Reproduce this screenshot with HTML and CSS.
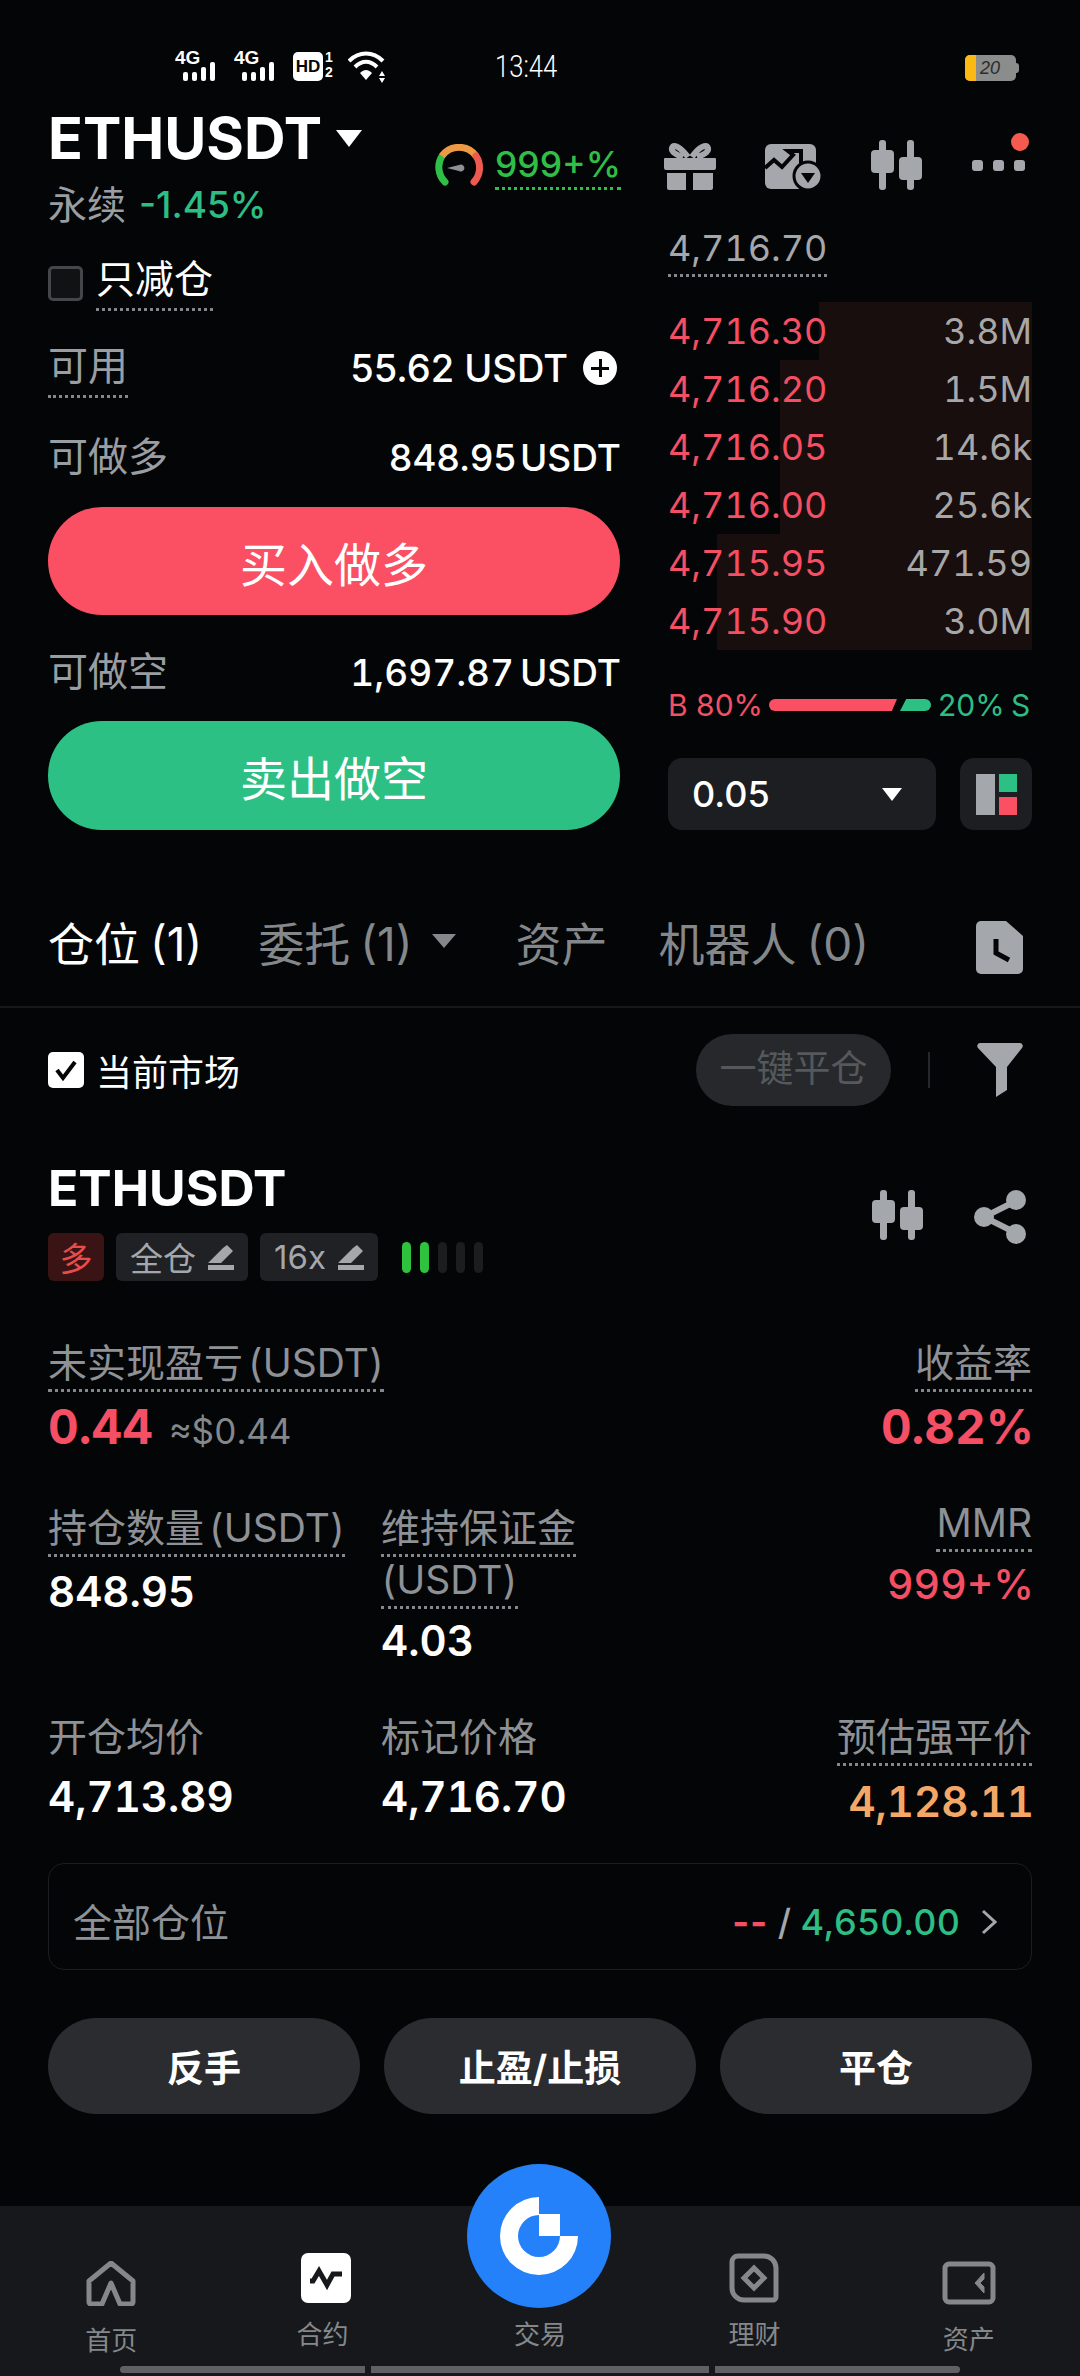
FILE: index.html
```html
<!DOCTYPE html>
<html lang="zh-CN">
<head>
<meta charset="utf-8">
<title>ETHUSDT</title>
<link rel="stylesheet" href="styles.css">
</head>
<body>
<div class="phone">
  <header class="status">
    <svg class="sig" width="46" height="34" viewBox="0 0 46 34"><text x="0" y="16" class="sig-t">4G</text><rect x="8" y="24" width="5" height="9" rx="2"/><rect x="17" y="24" width="5" height="9" rx="2"/><rect x="26" y="19" width="5" height="14" rx="2"/><rect x="35" y="14" width="5" height="19" rx="2"/></svg>
    <svg class="sig" width="46" height="34" viewBox="0 0 46 34"><text x="0" y="16" class="sig-t">4G</text><rect x="8" y="24" width="5" height="9" rx="2"/><rect x="17" y="24" width="5" height="9" rx="2"/><rect x="26" y="19" width="5" height="14" rx="2"/><rect x="35" y="14" width="5" height="19" rx="2"/></svg>
    <span class="hd">HD</span>
    <span class="hd-n"><i>1</i><i>2</i></span>
    <svg class="wifi" width="40" height="32" viewBox="0 0 40 32"><path d="M1 10C11 0 25 0 35 10" fill="none" stroke="#fff" stroke-width="4"/><path d="M7 16C14 9 22 9 29 16" fill="none" stroke="#fff" stroke-width="4"/><path d="M12 22L18 29L24 22C20 18 16 18 12 22Z" fill="#fff"/><path d="M34 20l3 5h-6zM34 32l3-5h-6z" fill="#fff"/></svg>
    <span class="time">13:44</span>
    <span class="battery"><span class="b-level"></span><span class="b-num">20</span></span>
  </header>

  <section class="trade">
    <div class="left">
      <div class="head">
        <div>
          <div class="title-row"><h1 class="title">ETHUSDT</h1><span class="caret-w"></span></div>
          <div class="sub"><span class="grey">永续</span><span class="green">-1.45%</span></div>
        </div>
        <div class="gauge">
          <svg width="50" height="44" viewBox="0 0 50 44"><path d="M10 38A21 21 0 0 1 7 12" fill="none" stroke="#2fbf46" stroke-width="7" stroke-linecap="round"/><path d="M7 12A21 21 0 0 1 41 12" fill="none" stroke="#ee9a45" stroke-width="7"/><path d="M41 12A21 21 0 0 1 39 38" fill="none" stroke="#ee5a50" stroke-width="7" stroke-linecap="round"/><path d="M12 24L24 21A3.5 3.5 0 1 1 24 27Z" fill="#8d9094"/></svg>
          <span class="gauge-v">999+%</span>
        </div>
      </div>
      <div class="reduce"><span class="box"></span><span class="dot-w">只减仓</span></div>
      <div class="line line-avail"><span class="dot-g grey">可用</span><span class="white avail">55.62 USDT<span class="plus"></span></span></div>
      <div class="line line-long"><span class="grey">可做多</span><span class="white tight">848.95 USDT</span></div>
      <button class="cta buy">买入做多</button>
      <div class="line line-short"><span class="grey">可做空</span><span class="white tight">1,697.87 USDT</span></div>
      <button class="cta sell">卖出做空</button>
    </div>

    <div class="right">
      <div class="icons">
        <svg width="52" height="50" viewBox="0 0 52 50" fill="#a4a7ab"><path d="M1 18h50a1 1 0 0 1 1 1v9a2 2 0 0 1-2 2H2a2 2 0 0 1-2-2v-9a1 1 0 0 1 1-1ZM3 33h19v17H5a2 2 0 0 1-2-2ZM29 33h20v15a2 2 0 0 1-2 2H29Z"/><path d="M24 17C17 8 10 3 8 8c-1 4 5 7 11 9M28 17C34 8 42 3 44 8c1 4-5 7-11 9" fill="none" stroke="#a4a7ab" stroke-width="6"/></svg>
        <svg width="56" height="48" viewBox="0 0 56 48"><rect x="0" y="2" width="51" height="45" rx="6" fill="#a4a7ab"/><path d="M0 26L9 18L17 25L28 13L23 9H36V21" fill="none" stroke="#040506" stroke-width="4"/><circle cx="43" cy="34" r="14" fill="#a4a7ab" stroke="#040506" stroke-width="3"/><path d="M36 31H50L43 41Z" fill="#040506"/></svg>
        <svg class="candles" width="52" height="50" viewBox="0 0 52 50" fill="#a4a7ab"><rect x="8" y="0" width="7" height="50" rx="3"/><rect x="0" y="10" width="23" height="23" rx="4"/><rect x="36" y="0" width="7" height="50" rx="3"/><rect x="28" y="17" width="23" height="23" rx="4"/></svg>
        <span class="more"><i></i><i></i><i></i><b></b></span>
      </div>
      <div class="mark"><span class="dot-g">4,716.70</span></div>
      <div class="book">
        <div class="row"><span class="bar b1"></span><span class="p">4,716.30</span><span class="q">3.8M</span></div>
        <div class="row"><span class="bar b2"></span><span class="p">4,716.20</span><span class="q">1.5M</span></div>
        <div class="row"><span class="bar b2"></span><span class="p">4,716.05</span><span class="q">14.6k</span></div>
        <div class="row"><span class="bar b2"></span><span class="p">4,716.00</span><span class="q">25.6k</span></div>
        <div class="row"><span class="bar b3"></span><span class="p">4,715.95</span><span class="q">471.59</span></div>
        <div class="row"><span class="bar b3"></span><span class="p">4,715.90</span><span class="q">3.0M</span></div>
      </div>
      <div class="ratio"><span class="red">B 80%</span><span class="r-red"></span><span class="r-green"></span><span class="green">20% S</span></div>
      <div class="controls">
        <div class="select"><span>0.05</span><span class="caret-s"></span></div>
        <div class="layout"><svg width="42" height="42" viewBox="0 0 42 42"><rect x="0" y="0" width="19" height="41" fill="#a4a7ab"/><rect x="23" y="0" width="18" height="18" fill="#2dc085"/><rect x="23" y="23" width="18" height="18" fill="#fb4f63"/></svg></div>
      </div>
    </div>
  </section>

  <nav class="tabs">
    <span class="tab on">仓位 (1)</span>
    <span class="tab t2">委托 (1)<span class="caret-g"></span></span>
    <span class="tab t3">资产</span>
    <span class="tab t4">机器人 (0)</span>
    <svg class="doc" width="48" height="54" viewBox="0 0 48 54"><path d="M5 0H30L47 15V48a5 5 0 0 1-5 5H5a5 5 0 0 1-5-5V5a5 5 0 0 1 5-5Z" fill="#a4a7ab"/><path d="M20 18V32L33 39" fill="none" stroke="#040506" stroke-width="5"/></svg>
  </nav>

  <div class="toolbar">
    <span class="check"><svg width="36" height="36" viewBox="0 0 36 36"><rect width="36" height="36" rx="5" fill="#fff"/><path d="M9 18L15 26L27 10" fill="none" stroke="#040506" stroke-width="4"/></svg></span>
    <span class="market">当前市场</span>
    <span class="close-all">一键平仓</span>
    <span class="vsep"></span>
    <svg class="funnel" width="46" height="54" viewBox="0 0 46 54"><path d="M3 0H43A3 3 0 0 1 45 5L30 24V47L19 54V24L1 5A3 3 0 0 1 3 0Z" fill="#a4a7ab"/></svg>
  </div>

  <section class="pos-head">
    <div>
      <h2 class="pos-title">ETHUSDT</h2>
      <div class="tags">
        <span class="tag tag-long">多</span>
        <span class="tag">全仓<svg width="26" height="25" viewBox="0 0 26 25" fill="#a4a7ab"><path d="M15 3L19 0L25 6L13 18H0ZM0 20H26V25H0Z"/></svg></span>
        <span class="tag">16x<svg width="26" height="25" viewBox="0 0 26 25" fill="#a4a7ab"><path d="M15 3L19 0L25 6L13 18H0ZM0 20H26V25H0Z"/></svg></span>
        <span class="risk"><i class="on"></i><i class="on"></i><i></i><i></i><i></i></span>
      </div>
    </div>
    <div class="pos-icons">
      <svg width="52" height="50" viewBox="0 0 52 50" fill="#a4a7ab"><rect x="8" y="0" width="7" height="50" rx="3"/><rect x="0" y="10" width="23" height="23" rx="4"/><rect x="36" y="0" width="7" height="50" rx="3"/><rect x="28" y="17" width="23" height="23" rx="4"/></svg>
      <svg width="52" height="54" viewBox="0 0 52 54"><path d="M42 11L10 27L42 43" fill="none" stroke="#a4a7ab" stroke-width="6"/><circle cx="42" cy="10" r="10" fill="#a4a7ab"/><circle cx="10" cy="27" r="10" fill="#a4a7ab"/><circle cx="42" cy="44" r="10" fill="#a4a7ab"/></svg>
    </div>
  </section>

  <section class="stats">
    <div class="stat span2"><div class="lab"><span class="u">未实现盈亏 (USDT)</span></div><div class="val big red"><b>0.44</b><span class="approx">≈$0.44</span></div></div>
    <div class="stat end"><div class="lab"><span class="u">收益率</span></div><div class="val big red"><b>0.82%</b></div></div>

    <div class="stat"><div class="lab"><span class="u">持仓数量 (USDT)</span></div><div class="val">848.95</div></div>
    <div class="stat"><div class="lab narrow"><span class="u">维持保证金 (USDT)</span></div><div class="val v2">4.03</div></div>
    <div class="stat end"><div class="lab mmr"><span class="u">MMR</span></div><div class="val red mid">999+%</div></div>

    <div class="stat"><div class="lab">开仓均价</div><div class="val v4">4,713.89</div></div>
    <div class="stat"><div class="lab">标记价格</div><div class="val v4">4,716.70</div></div>
    <div class="stat end"><div class="lab"><span class="u">预估强平价</span></div><div class="val orange v3">4,128.11</div></div>
  </section>

  <section class="all">
    <span class="all-l">全部仓位</span>
    <span class="all-r"><span class="dash">--</span> / <span class="green">4,650.00</span><svg width="16" height="26" viewBox="0 0 16 26"><path d="M2 2L14 13L2 24" fill="none" stroke="#a4a7ab" stroke-width="3"/></svg></span>
  </section>

  <section class="actions">
    <button class="act">反手</button>
    <button class="act">止盈/止损</button>
    <button class="act">平仓</button>
  </section>

  <nav class="bottom">
    <span class="fab"><svg width="80" height="80" viewBox="-40 -40 80 80"><path d="M0-39A39 39 0 1 0 39 0H21A21 21 0 1 1 0-21Z" fill="#fff"/><rect x="0" y="-22" width="21" height="22" fill="#fff"/></svg></span>
    <div class="nav-grid">
      <div class="nav low"><svg width="50" height="45" viewBox="0 0 50 45"><path d="M25 2L47 20V41A2 2 0 0 1 45 43H34L25 22L16 43H5A2 2 0 0 1 3 41V20Z" fill="none" stroke="#85888b" stroke-width="5" stroke-linejoin="round"/></svg><span>首页</span></div>
      <div class="nav contract"><svg width="50" height="50" viewBox="0 0 50 50"><rect width="50" height="50" rx="7" fill="#fff"/><path d="M9 28H12L18 18L26 32L32 21H41" fill="none" stroke="#16181b" stroke-width="5"/></svg><span>合约</span></div>
      <div class="nav mid-nav"><span>交易</span></div>
      <div class="nav"><svg width="50" height="50" viewBox="0 0 50 50"><path d="M9 3H35A12 12 0 0 1 47 15V44A3 3 0 0 1 44 47H15A12 12 0 0 1 3 35V9A6 6 0 0 1 9 3Z" fill="none" stroke="#85888b" stroke-width="5"/><path d="M25 15L35 25L25 35L15 25Z" fill="none" stroke="#85888b" stroke-width="5"/></svg><span>理财</span></div>
      <div class="nav low"><svg width="54" height="44" viewBox="0 0 54 44"><rect x="3" y="3" width="48" height="38" rx="4" fill="none" stroke="#85888b" stroke-width="5"/><path d="M42 12L33 22L42 32V26L38 22L42 18Z" fill="#85888b" stroke="#85888b" stroke-width="1"/></svg><span>资产</span></div>
    </div>
    <div class="homebar"><i></i><i></i><i></i></div>
  </nav>
</div>
</body>
</html>
```
FILE: styles.css
```css
* { box-sizing: border-box; }
html, body { margin: 0; padding: 0; background: #040506; }
body { font-family: Inter, "Noto Sans CJK SC", sans-serif; color: #fff; }
.phone { width: 1080px; height: 2376px; overflow: hidden; position: relative; background: #040506; }
i { font-style: normal; }

.grey { color: #9a9da1; }
.white { color: #fff; }
.green { color: #2dbd85; }
.red { color: #f44f64; }
.orange { color: #f4a868; }

/* status bar */
.status { height: 110px; padding: 48px 0 0 175px; display: flex; align-items: flex-start; }
.status .sig { fill: #fff; margin-right: 13px; flex: none; }
.sig-t { font: 700 19px "Liberation Sans", sans-serif; fill: #fff; }
.hd { width: 30px; height: 29px; margin-top: 4px; background: #fff; color: #040506; border-radius: 5px; font: 700 17px/29px "Liberation Sans", sans-serif; text-align: center; }
.hd-n { display: flex; flex-direction: column; font: 700 14px/15px "Liberation Sans", sans-serif; margin: 2px 12px 0 2px; width: 11px; }
.wifi { flex: none; margin-top: 3px; }
.time { margin: 3px 0 0 107px; font: 300 32px/30px Roboto, sans-serif; width: 60px; white-space: nowrap; transform: scaleX(0.8); transform-origin: left center; }
.battery { margin: 7px 0 0 410px; width: 51px; height: 26px; position: relative; background: #8b8c8c; border-radius: 5px; display: flex; }
.battery::after { content: ""; position: absolute; right: -3px; top: 8px; width: 4px; height: 10px; background: #8b8c8c; border-radius: 0 3px 3px 0; }
.b-level { width: 11px; background: #fdb913; border-radius: 5px 0 0 5px; }
.b-num { font: italic 400 18px/26px "Liberation Sans", sans-serif; color: #2c2c2c; margin-left: 4px; }

/* top trade section */
.trade { display: flex; padding: 0 48px; gap: 48px; height: 720px; }
.left { width: 572px; flex: none; }
.right { width: 364px; flex: none; }

.head { display: flex; justify-content: space-between; height: 120px; }
.title-row { display: flex; align-items: center; height: 56px; }
.title { margin: 0; font-size: 57.5px; line-height: 56px; font-weight: 700; letter-spacing: 0; }
.caret-w { width: 0; height: 0; margin-left: 14px; border-left: 13px solid transparent; border-right: 13px solid transparent; border-top: 17px solid #fff; }
.sub { margin-top: 14px; height: 50px; font-size: 39px; line-height: 50px; display: flex; gap: 13px; }
.sub .green { font-size: 37px; font-weight: 500; }
.gauge { display: flex; gap: 10px; margin: 32px -1px 0 0; height: 56px; }
.gauge svg { margin-top: 2px; }
.gauge-v { color: #2fbf46; font-size: 35.5px; line-height: 46px; font-weight: 500; border-bottom: 3px dotted #2fbf46; align-self: flex-start; height: 48px; }

.reduce { margin-top: 21px; height: 60px; display: flex; align-items: flex-start; }
.box { width: 35px; height: 35px; margin: 15px 13px 0 0; border: 3px solid #44474a; border-radius: 5px; background: #101214; }
.dot-w { font-size: 39px; line-height: 56px; height: 60px; border-bottom: 3px dotted #85888b; }
.dot-g { border-bottom: 3px dotted #85888b; }

.line { display: flex; justify-content: space-between; align-items: center; font-size: 38px; }
.line .grey { font-size: 40px; }
.line .white { font-weight: 500; }
.line .tight { font-size: 37px; word-spacing: -6px; padding-top: 6px; margin-right: -1px; }
.line-short .tight { font-feature-settings: "tnum"; word-spacing: -4px; }
.line-avail { margin-top: 27px; height: 60px; }
.line-avail .grey { height: 60px; line-height: 56px; }
.avail { display: flex; align-items: center; gap: 15px; margin-right: 3px; }
.plus { width: 34px; height: 34px; border-radius: 50%; background: #fff; position: relative; }
.plus::before, .plus::after { content: ""; position: absolute; background: #040506; }
.plus::before { left: 8px; right: 8px; top: 15.5px; height: 3px; }
.plus::after { top: 8px; bottom: 8px; left: 15.5px; width: 3px; }
.line-long { margin-top: 26px; height: 60px; }
.line-short { margin-top: 24px; height: 60px; }
.cta { display: block; width: 100%; border: 0; height: 108px; border-radius: 54px; color: #fff; font: 400 47px "Noto Sans CJK SC", sans-serif; padding: 0; }
.buy { background: #fb4f63; margin-top: 23px; }
.sell { background: #2dc085; margin-top: 22px; height: 109px; }

.icons { display: flex; justify-content: space-between; align-items: flex-start; height: 50px; margin: 30px 6px 0 -4px; position: relative; }
.icons svg { flex: none; }
.icons svg:nth-child(2) { margin-top: 2px; }
.more { width: 54px; height: 50px; position: relative; display: flex; gap: 10px; padding-top: 20px; }
.more i { width: 11px; height: 11px; background: #a4a7ab; border-radius: 3px; }
.more b { position: absolute; right: -3px; top: -7px; width: 18px; height: 18px; border-radius: 50%; background: #f45b4e; }
.mark { margin-top: 35px; height: 52px; font-size: 36px; line-height: 46px; color: #a4a7ab; font-feature-settings: "tnum"; }
.mark .dot-g { display: inline-block; height: 52px; }
.book { margin-top: 25px; font-feature-settings: "tnum"; }
.row { position: relative; height: 58px; display: flex; justify-content: space-between; align-items: center; font-size: 36px; }
.bar { position: absolute; top: 0; right: 0; bottom: 0; background: #180e0e; }
.b1 { left: 151px; } .b2 { left: 112px; } .b3 { left: 49px; }
.p { position: relative; color: #f44f64; }
.q { position: relative; color: #a8a7a7; }
.ratio { display: flex; align-items: center; margin-top: 35px; height: 40px; font-size: 30px; white-space: nowrap; }
.ratio .red { width: 101px; }
.ratio .green { margin-left: 7px; word-spacing: -2px; }
.r-red { width: 128px; height: 12px; background: #fb4f63; clip-path: polygon(0 0, 100% 0, 96% 100%, 0 100%); border-radius: 6px 0 0 6px; }
.r-green { width: 31px; height: 12px; margin-left: 3px; background: #2dc085; clip-path: polygon(20% 0, 100% 0, 100% 100%, 0 100%); border-radius: 0 6px 6px 0; }
.controls { display: flex; gap: 24px; margin-top: 33px; }
.select { width: 268px; height: 72px; border-radius: 14px; background: #1c1e21; padding: 0 34px 0 24px; display: flex; align-items: center; justify-content: space-between; font-size: 36px; font-weight: 500; }
.caret-s { width: 0; height: 0; border-left: 10px solid transparent; border-right: 10px solid transparent; border-top: 13px solid #fff; }
.layout { width: 72px; height: 72px; border-radius: 14px; background: #1c1e21; padding: 16px 0 0 16px; }
.layout svg { display: block; }

/* tabs */
.tabs { margin-top: 74px; height: 104px; padding: 0 56px 29px 48px; display: flex; align-items: center; border-bottom: 2px solid #16181a; font-size: 46px; color: #85888b; font-weight: 400; word-spacing: -3px; }
.tab { white-space: nowrap; }
.tab.on { color: #fff; }
.t2 { margin-left: 56px; display: flex; align-items: center; }
.t3 { margin-left: 59px; }
.t4 { margin-left: 51px; }
.caret-g { width: 0; height: 0; margin-left: 20px; border-left: 12px solid transparent; border-right: 12px solid transparent; border-top: 14px solid #85888b; }
.doc { margin-left: auto; margin-top: 14px; flex: none; }

/* toolbar */
.toolbar { margin-top: 26px; height: 72px; padding: 0 57px 0 48px; display: flex; align-items: center; }
.check { height: 36px; }
.check svg { display: block; }
.market { margin-left: 12px; font-size: 36px; }
.close-all { margin-left: auto; width: 195px; height: 72px; border-radius: 36px; background: #26282b; color: #55585c; font-size: 37px; line-height: 70px; text-align: center; white-space: nowrap; }
.vsep { width: 2px; height: 36px; margin: 0 47px 0 37px; background: #26282b; }
.funnel { flex: none; }

/* position header */
.pos-head { margin-top: 54px; padding: 0 54px 0 48px; display: flex; justify-content: space-between; height: 120px; }
.pos-title { margin: 0; font-size: 50px; line-height: 56px; font-weight: 700; }
.tags { display: flex; align-items: center; gap: 12px; margin-top: 17px; }
.tag { height: 48px; padding: 0 14px; border-radius: 6px; background: #1f2125; color: #a4a7ab; font-size: 33px; display: flex; align-items: center; gap: 12px; }
.tag-long { width: 56px; padding: 0; justify-content: center; background: #3a1414; color: #ea4c4c; }
.tag svg { flex: none; }
.risk { display: flex; gap: 9px; margin-left: 12px; }
.risk i { width: 9px; height: 31px; border-radius: 5px; background: #1b1d1f; }
.risk i.on { background: #2fc23f; }
.pos-icons { display: flex; gap: 50px; margin-top: 30px; align-items: flex-start; }

/* stats */
.stats { margin-top: 57px; padding: 0 48px; display: grid; grid-template-columns: 333px 1fr auto; grid-template-rows: 165px 209px 152px; font-feature-settings: "tnum"; }
.span2 { grid-column: span 2; }
.end { text-align: right; }
.lab { font-size: 39px; line-height: 52px; color: #8e9195; word-spacing: -6px; }
.lab .u { border-bottom: 3px dotted #85888b; padding-bottom: 3px; }
.narrow { max-width: 230px; }
.val { font-size: 42px; line-height: 52px; font-weight: 600; margin-top: 12px; }
.end .val { margin-right: -2px; }
.val.v2 { margin-top: 9px; }
.val.v3 { margin-top: 13px; }
.val.v4 { margin-top: 8px; }
.val.mid { font-weight: 500; margin-top: 9px; font-size: 41px; }
.lab.mmr { margin-top: -5px; }
.big b { font-size: 47.5px; font-weight: 700; }
.approx { margin-left: 16px; font-size: 35px; color: #85888b; font-weight: 400; }

/* all positions */
.all { height: 107px; margin: 0 48px; padding: 10px 34px 0 24px; border: 1.5px solid #1b1d20; border-radius: 16px; display: flex; justify-content: space-between; align-items: center; }
.all-l { font-size: 39px; color: #8e9195; padding-bottom: 4px; }
.all-r { font-size: 36px; font-weight: 500; color: #a4a7ab; display: flex; align-items: center; white-space: pre; font-feature-settings: "tnum"; }
.all-r svg { margin-left: 21px; }
.dash { color: #f44f64; font-weight: 700; font-feature-settings: normal; letter-spacing: 1px; }

/* actions */
.actions { margin: 48px 48px 0; display: flex; gap: 24px; }
.act { flex: 1; height: 96px; border: 0; border-radius: 48px; background: #2a2c2f; color: #fff; font: 700 37px Inter, "Noto Sans CJK SC", sans-serif; padding: 0; }

/* bottom nav */
.bottom { position: relative; margin-top: 92px; height: 170px; background: #16181b; display: flex; flex-direction: column; }
.fab { position: absolute; left: 467px; top: -42px; width: 144px; height: 144px; border-radius: 50%; background: #2481f9; display: flex; align-items: center; justify-content: center; }
.nav-grid { display: grid; grid-template-columns: repeat(5, 1fr); padding: 0 4px; }
.nav { display: flex; flex-direction: column; align-items: center; padding-top: 47px; font-size: 26px; line-height: 36px; color: #85888b; }
.nav svg { flex: none; display: block; margin-bottom: 14px; }
.nav.low { padding-top: 55px; }
.nav.low svg { margin-bottom: 17px; }
.contract span { margin-right: 6px; }
.mid-nav { padding-top: 111px; }
.homebar { margin-top: auto; margin-bottom: 3px; padding: 0 120px; display: flex; gap: 6px; height: 7px; }
.homebar i { background: #5f6164; flex: 245; }
.homebar i:nth-child(1) { border-radius: 4px 0 0 4px; }
.homebar i:nth-child(2) { flex: 337; }
.homebar i:nth-child(3) { border-radius: 0 4px 4px 0; }
```
